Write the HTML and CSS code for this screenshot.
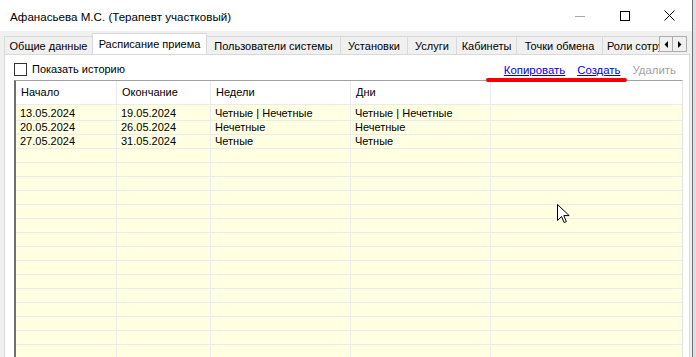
FILE: index.html
```html
<!DOCTYPE html>
<html lang="ru">
<head>
<meta charset="utf-8">
<title>Расписание приема</title>
<link rel="stylesheet" href="styles.css">
</head>
<body>
<div class="window">
  <div class="titlebar">
    <div class="title">Афанасьева М.С. (Терапевт участковый)</div>
    <div class="controls">
      <div class="ctl ctl-min"><svg width="10" height="10" viewBox="0 0 10 10"><path d="M0 5.5H10" stroke="#a8a8a8" stroke-width="1"/></svg></div>
      <div class="ctl"><svg width="10" height="10" viewBox="0 0 10 10"><rect x="0.5" y="0.5" width="9" height="9" fill="none" stroke="#000" stroke-width="1"/></svg></div>
      <div class="ctl"><svg width="11" height="11" viewBox="0 0 11 11"><path d="M0.5 0.5L10.5 10.5M10.5 0.5L0.5 10.5" stroke="#000" stroke-width="1"/></svg></div>
    </div>
  </div>
  <div class="tabstrip">
    <div class="tabs">
      <div class="tab t1">Общие данные</div>
      <div class="tab t2 active">Расписание приема</div>
      <div class="tab t3">Пользователи системы</div>
      <div class="tab t4">Установки</div>
      <div class="tab t5">Услуги</div>
      <div class="tab t6">Кабинеты</div>
      <div class="tab t7">Точки обмена</div>
      <div class="tab t8">Роли сотрудников</div>
    </div>
    <div class="scrollbtns">
      <div class="sbtn"><svg width="4" height="7" viewBox="0 0 4 7"><path d="M4 0V7L0.5 3.5Z" fill="#000"/></svg></div>
      <div class="sbtn"><svg width="4" height="7" viewBox="0 0 4 7"><path d="M0 0V7L3.5 3.5Z" fill="#000"/></svg></div>
    </div>
  </div>
  <div class="panel">
    <div class="toolbar">
      <label class="check"><span class="box"></span><span>Показать историю</span></label>
      <div class="links">
        <a class="link">Копировать</a>
        <a class="link">Создать</a>
        <span class="link disabled">Удалить</span>
        <span class="mark"></span>
      </div>
    </div>
    <div class="grid">
      <div class="row head">
        <div class="cell">Начало</div>
        <div class="cell">Окончание</div>
        <div class="cell">Недели</div>
        <div class="cell">Дни</div>
        <div class="cell"></div>
      </div>
      <div class="row data first">
        <div class="cell">13.05.2024</div>
        <div class="cell">19.05.2024</div>
        <div class="cell">Четные | Нечетные</div>
        <div class="cell">Четные | Нечетные</div>
        <div class="cell"></div>
      </div>
      <div class="row data">
        <div class="cell">20.05.2024</div>
        <div class="cell">26.05.2024</div>
        <div class="cell">Нечетные</div>
        <div class="cell">Нечетные</div>
        <div class="cell"></div>
      </div>
      <div class="row data">
        <div class="cell">27.05.2024</div>
        <div class="cell">31.05.2024</div>
        <div class="cell">Четные</div>
        <div class="cell">Четные</div>
        <div class="cell"></div>
      </div>
      <div class="row data"><div class="cell"></div><div class="cell"></div><div class="cell"></div><div class="cell"></div><div class="cell"></div></div>
      <div class="row data"><div class="cell"></div><div class="cell"></div><div class="cell"></div><div class="cell"></div><div class="cell"></div></div>
      <div class="row data"><div class="cell"></div><div class="cell"></div><div class="cell"></div><div class="cell"></div><div class="cell"></div></div>
      <div class="row data"><div class="cell"></div><div class="cell"></div><div class="cell"></div><div class="cell"></div><div class="cell"></div></div>
      <div class="row data"><div class="cell"></div><div class="cell"></div><div class="cell"></div><div class="cell"></div><div class="cell"></div></div>
      <div class="row data"><div class="cell"></div><div class="cell"></div><div class="cell"></div><div class="cell"></div><div class="cell"></div></div>
      <div class="row data"><div class="cell"></div><div class="cell"></div><div class="cell"></div><div class="cell"></div><div class="cell"></div></div>
      <div class="row data"><div class="cell"></div><div class="cell"></div><div class="cell"></div><div class="cell"></div><div class="cell"></div></div>
      <div class="row data"><div class="cell"></div><div class="cell"></div><div class="cell"></div><div class="cell"></div><div class="cell"></div></div>
      <div class="row data"><div class="cell"></div><div class="cell"></div><div class="cell"></div><div class="cell"></div><div class="cell"></div></div>
      <div class="row data"><div class="cell"></div><div class="cell"></div><div class="cell"></div><div class="cell"></div><div class="cell"></div></div>
      <div class="row data"><div class="cell"></div><div class="cell"></div><div class="cell"></div><div class="cell"></div><div class="cell"></div></div>
      <div class="row data"><div class="cell"></div><div class="cell"></div><div class="cell"></div><div class="cell"></div><div class="cell"></div></div>
      <div class="row data"><div class="cell"></div><div class="cell"></div><div class="cell"></div><div class="cell"></div><div class="cell"></div></div>
      <div class="row data"><div class="cell"></div><div class="cell"></div><div class="cell"></div><div class="cell"></div><div class="cell"></div></div>
      <svg class="cursor" width="13" height="20" viewBox="0 0 13 20"><path d="M0.5 0.5V16.5L4.5 12.5L7.2 18.6L9.4 17.6L6.8 11.6H12.2Z" fill="#fff" stroke="#000" stroke-width="1" stroke-linejoin="miter"/></svg>
    </div>
  </div>
</div>
</body>
</html>
```

FILE: styles.css
```css
* { box-sizing: border-box; }
html, body { margin: 0; padding: 0; }
body {
  width: 696px;
  height: 357px;
  overflow: hidden;
  background: #dcdfe4;
  font-family: "Liberation Sans", Arial, sans-serif;
  font-size: 11px;
  color: #000;
}
.window {
  width: 693px;
  height: 357px;
  background: #f0f0f0;
  border-right: 1px solid #707070;
  display: flex;
  flex-direction: column;
}
.titlebar {
  height: 31px;
  flex: none;
  background: #fff;
  display: flex;
  align-items: center;
  padding-left: 10px;
}
.title {
  flex: 1;
  font-size: 11.6px;
  padding-top: 1px;
}
.controls { display: flex; height: 31px; }
.ctl {
  width: 45px;
  display: flex;
  align-items: center;
  justify-content: center;
}
.tabstrip {
  height: 23px;
  flex: none;
  display: flex;
  align-items: flex-end;
  padding-left: 4px;
  position: relative;
  z-index: 1;
}
.tabs {
  width: 655px;
  display: flex;
  align-items: flex-end;
  overflow: hidden;
  height: 23px;
}
.tab {
  flex: none;
  height: 18px;
  border: 1px solid #d9d9d9;
  border-bottom: none;
  border-right: none;
  background: #f0f0f0;
  line-height: 18px;
  text-align: center;
  white-space: nowrap;
  overflow: hidden;
}
.tab.active {
  height: 22px;
  margin-bottom: -1px;
  background: #fff;
  border-right: 1px solid #d9d9d9;
  line-height: 20px;
}
.tab.active + .tab { border-left: none; }
.t1 { width: 88px; }
.t2 { width: 115px; }
.t3 { width: 133px; }
.t4 { width: 67px; }
.t5 { width: 49px; }
.t6 { width: 60px; }
.t7 { width: 86px; }
.t8 { width: 90px; text-align: left; padding-left: 4px; }
.scrollbtns {
  display: flex;
  margin-bottom: 2px;
  height: 16px;
}
.sbtn {
  width: 14px;
  height: 16px;
  background: #f0f0f0;
  border: 1px solid #adadad;
  display: flex;
  align-items: center;
  justify-content: center;
}
.sbtn + .sbtn { border-left: none; }
.panel {
  flex: 1;
  min-height: 0;
  margin-left: 4px;
  margin-right: 2px;
  background: #fff;
  border: 1px solid #d9d9d9;
  border-bottom: none;
  display: flex;
  flex-direction: column;
  padding: 0 6px 0 9px;
}
.toolbar {
  height: 25px;
  flex: none;
  display: flex;
  align-items: flex-start;
  justify-content: space-between;
  padding-top: 8px;
}
.check {
  display: flex;
  align-items: center;
  gap: 5px;
  height: 13px;
  line-height: 13px;
}
.box {
  width: 13px;
  height: 13px;
  border: 1px solid #333;
  background: #fff;
}
.links {
  display: flex;
  gap: 12px;
  padding-right: 7px;
  position: relative;
  height: 13px;
  line-height: 14px;
  font-size: 11.4px;
}
.link {
  color: #0000ee;
  text-decoration: underline;
}
.link.disabled {
  color: #a0a0a0;
  text-decoration: none;
}
.mark {
  position: absolute;
  left: -18px;
  width: 141px;
  top: 15px;
  height: 4px;
  border-radius: 2px;
  background: #f00000;
  z-index: 2;
}
.grid {
  flex: 1;
  min-height: 0;
  overflow: hidden;
  border-top: 1px solid #a0a0a0;
  border-left: 2px solid #707070;
  border-right: 1px solid #e3e3e3;
  background: #ffffe1;
  position: relative;
}
.row {
  display: grid;
  grid-template-columns: 101px 94px 140px 140px 1fr;
}
.cell {
  border-right: 1px solid #ebebeb;
  border-bottom: 1px solid #ebebeb;
  white-space: nowrap;
  overflow: hidden;
}
.row .cell:last-child { border-right: none; }
.head { background: #fff; }
.head .cell {
  height: 24px;
  line-height: 23px;
  padding-left: 5px;
  font-size: 11px;
}
.data .cell {
  height: 14px;
  line-height: 13px;
  padding-left: 4px;
  font-size: 11px;
}
.data.first .cell {
  height: 16px;
  line-height: 17px;
}
.cursor {
  position: absolute;
  left: 541px;
  top: 123px;
}
```
